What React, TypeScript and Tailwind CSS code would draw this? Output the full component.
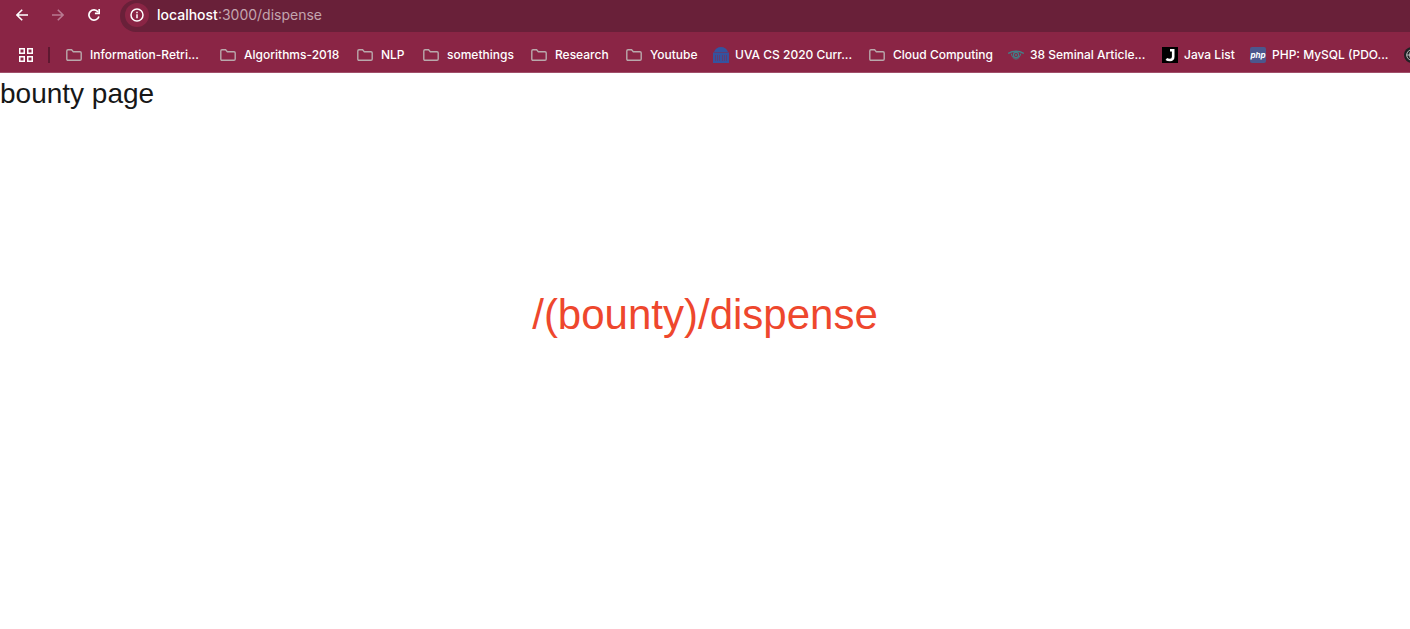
import type { ReactNode } from 'react';

function FolderIcon() {
  return (
    <svg className="h-4 w-4 shrink-0" viewBox="0 0 16 16" fill="none" stroke="#b9a9ac" strokeWidth="1.4" aria-hidden="true">
      <path d="M.8 12V4Q.8 2.8 2 2.8H5.6L7.3 4.7H14Q15.2 4.7 15.2 5.9V12Q15.2 13.3 14 13.3H2Q.8 13.3 .8 12Z" />
    </svg>
  );
}

function RotundaIcon() {
  return (
    <svg className="h-4 w-4 shrink-0" viewBox="0 0 16 16" fill="#34539f" aria-hidden="true">
      <path d="M1 5Q3 0 8 0T15 5Z" />
      <path d="M0 6H16V8H0ZM0 14H16V16H0Z" />
      <path d="M0 8H2V14H0ZM3 8H4V14H3ZM5 8H6V14H5ZM7 8H9V14H7ZM10 8H11V14H10ZM12 8H13V14H12ZM14 8H16V14H14Z" />
      <path d="M0 5H16V14H0Z" opacity=".5" />
    </svg>
  );
}

function EyeIcon() {
  return (
    <svg className="h-4 w-4 shrink-0" viewBox="0 0 16 16" fill="none" stroke="#437f88" aria-hidden="true">
      <path d="M.2 6.5Q3.5 4.2 8 4.2T15.8 6.5" strokeWidth="1.4" />
      <path d="M3.2 6.5Q4.5 12 8 12T12.8 6.5" strokeWidth="1" />
      <circle cx="8" cy="8" r="2.6" strokeWidth="1.2" />
      <circle cx="8" cy="8" r="1.1" fill="#437f88" stroke="none" />
    </svg>
  );
}

function JavaListIcon() {
  return (
    <svg className="h-4 w-4 shrink-0" viewBox="0 0 16 16" aria-hidden="true">
      <path d="M0 0H16V16H0Z" fill="#000" />
      <path d="M8 3.2H11.2V9.8Q11.2 13 8 13Q5.6 13 4.3 12" fill="none" stroke="#fff" strokeWidth="2.6" />
    </svg>
  );
}

function PhpIcon() {
  return (
    <span className="flex h-4 w-4 shrink-0 items-center justify-center rounded-xs bg-[#4b578d] text-[8px] leading-none font-bold text-white italic" aria-hidden="true">
      php
    </span>
  );
}

const bookmarks: { label: string; icon?: ReactNode; width: string }[] = [
  { label: 'Information-Retri...', width: 'w-[154px]' },
  { label: 'Algorithms-2018', width: 'w-[137px]' },
  { label: 'NLP', width: 'w-[66px]' },
  { label: 'somethings', width: 'w-[108px]' },
  { label: 'Research', width: 'w-[95px]' },
  { label: 'Youtube', width: 'w-[87px]' },
  { label: 'UVA CS 2020 Curr...', icon: <RotundaIcon />, width: 'w-[156px]' },
  { label: 'Cloud Computing', width: 'w-[139px]' },
  { label: '38 Seminal Article...', icon: <EyeIcon />, width: 'w-[154px]' },
  { label: 'Java List', icon: <JavaListIcon />, width: 'w-[88px]' },
  { label: 'PHP: MySQL (PDO...', icon: <PhpIcon />, width: 'w-[154px]' },
];

function Toolbar() {
  return (
    <div className="flex h-8 pl-3">
      <nav className="flex h-[30px] items-center gap-4" aria-label="History">
        <button type="button" aria-label="Back" className="flex h-5 w-5 items-center justify-center text-white">
          <svg className="h-3 w-3" viewBox="0 0 12 12" fill="none" stroke="currentColor" strokeWidth="1.6" aria-hidden="true">
            <path d="M12 6H1.2M6.2 .7L.9 6L6.2 11.3" />
          </svg>
        </button>
        <button type="button" aria-label="Forward" className="flex h-5 w-5 items-center justify-center text-[#b97a91]">
          <svg className="h-3 w-3" viewBox="0 0 12 12" fill="none" stroke="currentColor" strokeWidth="1.6" aria-hidden="true">
            <path d="M0 6H10.8M5.8 .7L11.1 6L5.8 11.3" />
          </svg>
        </button>
        <button type="button" aria-label="Reload" className="flex h-5 w-5 items-center justify-center text-white">
          <svg className="h-3 w-3" viewBox="0 0 12 12" fill="none" stroke="currentColor" strokeWidth="1.7" aria-hidden="true">
            <path d="M10.9 7.5A5.1 5.1 0 1 1 10.1 2.9" />
            <path d="M11.2 0V4.3H6.9" />
          </svg>
        </button>
      </nav>
      <div className="ml-4 flex h-8 min-w-0 flex-1 items-start rounded-l-full bg-[#692039] pl-[5px]">
        <div className="flex h-[30px] items-center gap-2">
          <button type="button" aria-label="View site information" className="flex h-6 w-6 items-center justify-center rounded-full bg-[#8a2545] text-white">
            <svg className="h-[14px] w-[14px]" viewBox="0 0 14 14" fill="none" stroke="currentColor" strokeWidth="1.5" aria-hidden="true">
              <circle cx="7" cy="7" r="6" />
              <path d="M7 6.2V10.3M7 3.7V5.2" />
            </svg>
          </button>
          <p className="text-[14px] leading-5 text-[#c3a5af]">
            <span className="font-medium text-white">localhost</span>:3000/dispense
          </p>
        </div>
      </div>
    </div>
  );
}

function BookmarksBar() {
  return (
    <div className="flex h-[41px] items-center overflow-hidden border-b border-[#a04f6a] pt-[6px] pl-[19px] text-[12px] leading-4 font-medium text-white">
      <button type="button" aria-label="All apps" className="shrink-0">
        <svg className="h-[14px] w-[14px]" viewBox="0 0 14 14" fill="none" stroke="#fff" strokeWidth="1.5" aria-hidden="true">
          <path d="M.75 .75H5.25V5.25H.75ZM8.75 .75H13.25V5.25H8.75ZM.75 8.75H5.25V13.25H.75ZM8.75 8.75H13.25V13.25H8.75Z" />
        </svg>
      </button>
      <span className="mr-4 ml-[15px] h-4 w-[2px] shrink-0 bg-[#5e1830]" />
      <ul className="flex">
        {bookmarks.map(({ label, icon, width }) => (
          <li key={label} className={`shrink-0 ${width}`}>
            <a href="#" className={`flex items-center whitespace-nowrap ${icon ? 'gap-[6px]' : 'gap-2'}`}>
              {icon ?? <FolderIcon />}
              {label}
            </a>
          </li>
        ))}
        <li className="shrink-0">
          <a href="#" aria-label="More bookmarks">
            <svg className="h-4 w-4" viewBox="0 0 16 16" fill="none" stroke="#bbb" aria-hidden="true">
              <circle cx="8" cy="8" r="8" fill="#202124" stroke="none" />
              <circle cx="8" cy="8" r="5.3" />
              <path d="M2.7 8H13.3M8 2.7Q3 8 8 13.3Q13 8 8 2.7" />
            </svg>
          </a>
        </li>
      </ul>
    </div>
  );
}

export default function App() {
  return (
    <div className="flex min-h-screen flex-col bg-white">
      <header className="bg-[#8a2545] font-['Inter',sans-serif]">
        <Toolbar />
        <BookmarksBar />
      </header>
      <main className="flex flex-1 flex-col font-['Liberation_Sans',Arial,sans-serif]">
        <h1 className="text-[28px] leading-[42px] text-[#171717]">bounty page</h1>
        <div className="flex flex-1 items-center justify-center pb-[114px]">
          <p className="text-[42px] leading-[60px] text-[#ee472d]">/(bounty)/dispense</p>
        </div>
      </main>
    </div>
  );
}
